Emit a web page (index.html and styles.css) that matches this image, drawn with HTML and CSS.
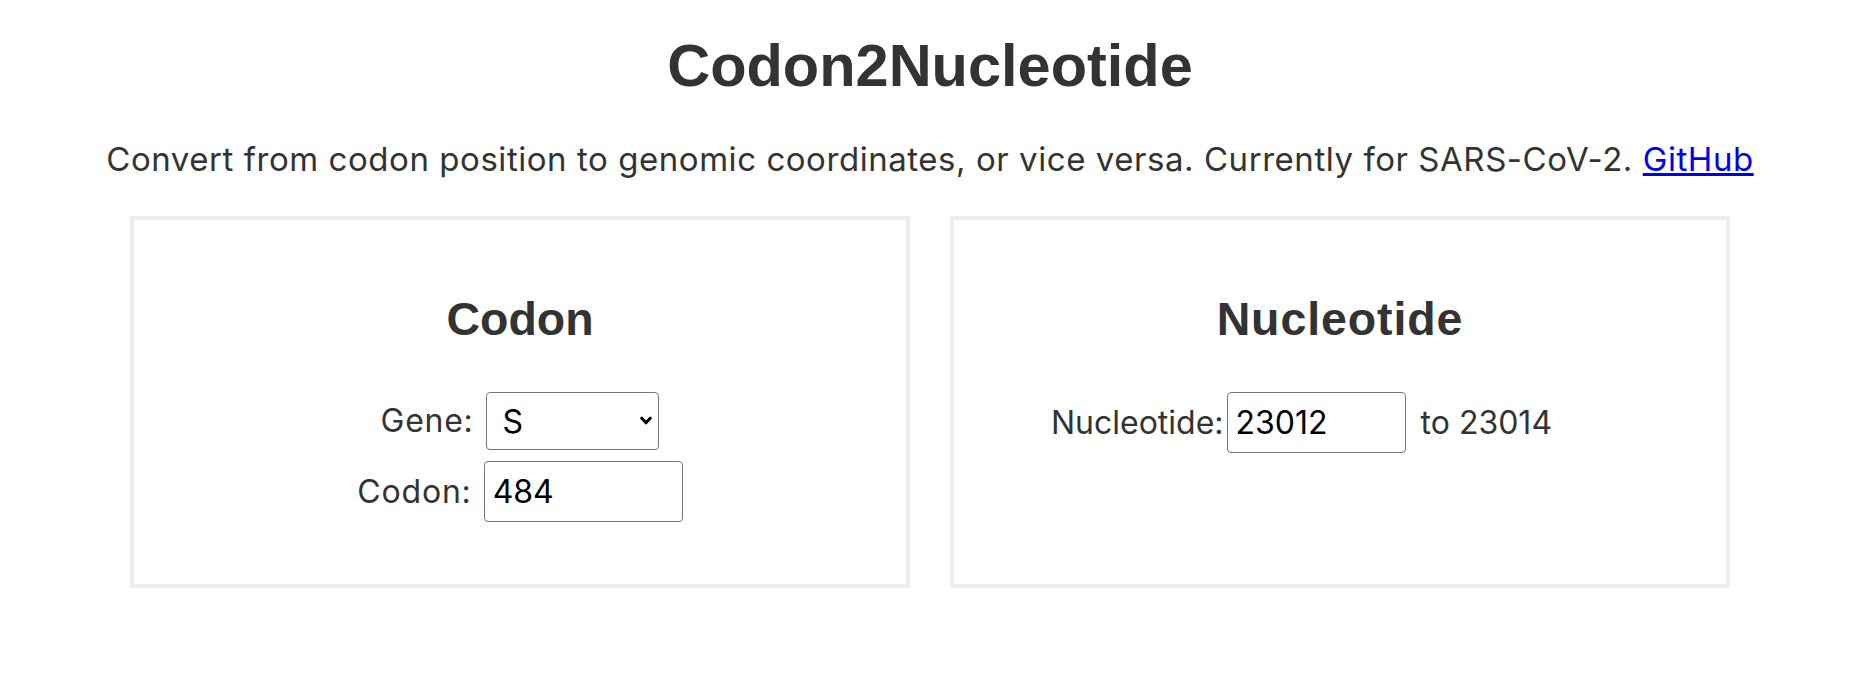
FILE: index.html
```html
<!DOCTYPE html>
<html lang="en">
<head>
<meta charset="utf-8">
<title>Codon2Nucleotide</title>
<link rel="stylesheet" href="styles.css">
</head>
<body>
<main class="page">
  <h1 class="title">Codon2Nucleotide</h1>
  <p class="intro">Convert from codon position to genomic coordinates, or vice versa. Currently for SARS-CoV-2. <a class="link" href="#">GitHub</a></p>
  <div class="panels">
    <section class="panel">
      <h2 class="panel-title">Codon</h2>
      <div class="row">
        <label class="label label-gene" for="gene">Gene:</label>
        <span class="select-wrap">
          <select id="gene" class="select">
            <option>S</option>
            <option>ORF1a</option>
            <option>ORF1b</option>
            <option>N</option>
          </select>
          <svg class="chevron" width="12" height="10" viewBox="0 0 12 10" aria-hidden="true"><path d="M1.8 2.2 L6 6.8 L10.2 2.2" fill="none" stroke="#000" stroke-width="3" stroke-linecap="round" stroke-linejoin="round"/></svg>
        </span>
      </div>
      <div class="row">
        <label class="label label-codon" for="codon">Codon:</label>
        <input id="codon" class="input input-codon" type="text" value="484">
      </div>
    </section>
    <section class="panel">
      <h2 class="panel-title panel-title-nuc">Nucleotide</h2>
      <div class="row row-nuc">
        <label class="label label-nuc" for="nuc">Nucleotide:</label>
        <input id="nuc" class="input input-nuc" type="text" value="23012">
        <span class="result">to 23014</span>
      </div>
    </section>
  </div>
</main>
</body>
</html>
```
FILE: styles.css
```css
html, body {
  margin: 0;
  padding: 0;
  background: #ffffff;
}

body {
  font-family: "Inter", "Roboto", "Liberation Sans", sans-serif;
  color: #333333;
}

.page {
  width: 1860px;
}

.title {
  margin: 36px 0 0;
  font-family: "Liberation Sans", Arial, sans-serif;
  font-weight: 700;
  font-size: 59.5px;
  line-height: 1;
  text-align: center;
  color: #333333;
}

.intro {
  margin: 47px 0 0;
  font-size: 33px;
  letter-spacing: 0.55px;
  line-height: 1;
  text-align: center;
}

.link {
  color: #0000ee;
  text-decoration: underline;
}

.panels {
  margin-top: 40px;
  display: grid;
  grid-template-columns: 780px 780px;
  column-gap: 40px;
  justify-content: center;
}

.panel {
  border: 4px solid #eeeeee;
  padding: 76px 0 62px;
  display: flex;
  flex-direction: column;
  align-items: center;
}

.panel-title {
  margin: 0 0 50px;
  font-family: "Liberation Sans", Arial, sans-serif;
  font-weight: 700;
  font-size: 46.5px;
  line-height: 1;
  color: #333333;
}

.panel-title-nuc {
  letter-spacing: 0.9px;
}

.row {
  display: flex;
  align-items: center;
  justify-content: center;
}

.row + .row {
  margin-top: 11px;
}

.label {
  font-size: 32px;
  line-height: 1;
}

.label-gene {
  margin-right: 13px;
  letter-spacing: 0.7px;
}

.label-codon {
  margin-right: 12px;
  letter-spacing: 0.8px;
}

.label-nuc {
  margin-right: 3px;
}

.select-wrap {
  position: relative;
  display: block;
}

.select {
  -webkit-appearance: none;
  appearance: none;
  display: block;
  box-sizing: border-box;
  width: 173px;
  height: 58px;
  margin: 0;
  padding: 0 30px 0 15px;
  border: 1px solid #767676;
  border-radius: 4px;
  background: #ffffff;
  font-family: inherit;
  font-size: 32px;
  color: #000000;
}

.chevron {
  position: absolute;
  left: 154px;
  top: 24px;
  pointer-events: none;
}

.input {
  display: block;
  box-sizing: border-box;
  height: 61px;
  margin: 0;
  padding: 0 8px;
  border: 1px solid #767676;
  border-radius: 4px;
  background: #ffffff;
  font-family: inherit;
  font-size: 32px;
  color: #000000;
}

.input-codon {
  width: 199px;
}

.input-nuc {
  width: 179px;
}

.result {
  margin-left: 15px;
  padding-right: 77px;
  font-size: 32px;
  line-height: 1;
}
```
